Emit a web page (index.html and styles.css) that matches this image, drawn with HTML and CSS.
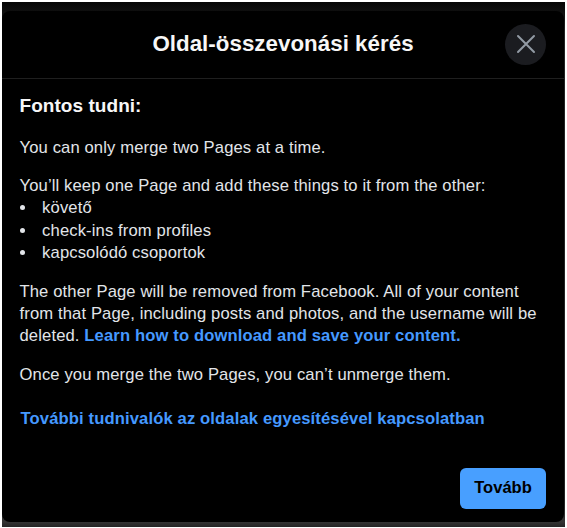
FILE: index.html
```
<!DOCTYPE html>
<html lang="hu">
<head>
<meta charset="utf-8">
<title>Oldal-összevonási kérés</title>
<link rel="stylesheet" href="styles.css">
</head>
<body>
<div class="backdrop">
<main class="dialog">
<header class="header">
<h1>Oldal-összevonási kérés</h1>
<button class="close" aria-label="Bezárás"><svg viewBox="0 0 20 20" width="20" height="20"><path d="M2 2 18 18M18 2 2 18"/></svg></button>
</header>
<section class="content">
<h2>Fontos tudni:</h2>
<p>You can only merge two Pages at a time.</p>
<p class="intro">You’ll keep one Page and add these things to it from the other:</p>
<ul>
<li>követő</li>
<li>check-ins from profiles</li>
<li>kapcsolódó csoportok</li>
</ul>
<p class="removal">The other Page will be removed from Facebook. All of your content<br>from that Page, including posts and photos, and the username will be<br>deleted. <a>Learn how to download and save your content.</a></p>
<p>Once you merge the two Pages, you can’t unmerge them.</p>
<p class="more"><a>További tudnivalók az oldalak egyesítésével kapcsolatban</a></p>
</section>
<footer class="footer"><button class="next">Tovább</button></footer>
</main>
</div>
</body>
</html>
```
FILE: styles.css
```
* { box-sizing: border-box; }
body { margin: 0; background: #fff; font-family: "Liberation Sans", Arial, sans-serif; color: #e2e5e9; }
.backdrop { width: 563px; height: 525px; margin: 2px 0 0 2px; padding: 9px 1px 5px 0; background: linear-gradient(#050505, #0e0e0e 9px, #242424 30px, #242424 500px, #343434 520px, #242424 525px); }
.dialog { height: 511px; border-radius: 8px; background: #000; display: flex; flex-direction: column; }
.header { height: 68px; flex: none; display: grid; grid-template-columns: 59px 1fr 41px; padding: 0 18px 1px 0; align-items: center; border-bottom: 1px solid #1f1f1f; }
h1, h2 { font-weight: bold; color: #f7f7f7; }
h1 { grid-column: 2; margin: 0; text-align: center; font-size: 22.3px; line-height: 28px; letter-spacing: .04px; white-space: nowrap; }
.close { width: 41px; height: 41px; border: 0; border-radius: 50%; padding: 0; background: #1b1c20; display: grid; place-items: center; }
.close path { fill: none; stroke: #929aa4; stroke-width: 2; stroke-linecap: round; }
.content { padding: 15px 17px 0 17.5px; font-size: 16.6px; line-height: 22px; letter-spacing: .13px; white-space: nowrap; }
h2 { margin: 0 0 19px; font-size: 19px; line-height: 24px; letter-spacing: .05px; }
p { margin: 0 0 16px; }
.intro { margin: 0; }
ul { margin: 0; padding: 0; list-style-position: inside; line-height: 22.5px; }
.removal { margin: 16px 0 17px; }
a { color: #4599ff; font-weight: bold; }
.more { margin: 22px 0 0 1px; }
.footer { margin-top: auto; padding: 0 18px 13px; display: flex; justify-content: flex-end; }
.next { width: 86px; height: 41px; padding: 0 0 2px; border: 0; border-radius: 6px; background: #489fff; color: #000; font: bold 16.5px "Liberation Sans", Arial, sans-serif; }
```
